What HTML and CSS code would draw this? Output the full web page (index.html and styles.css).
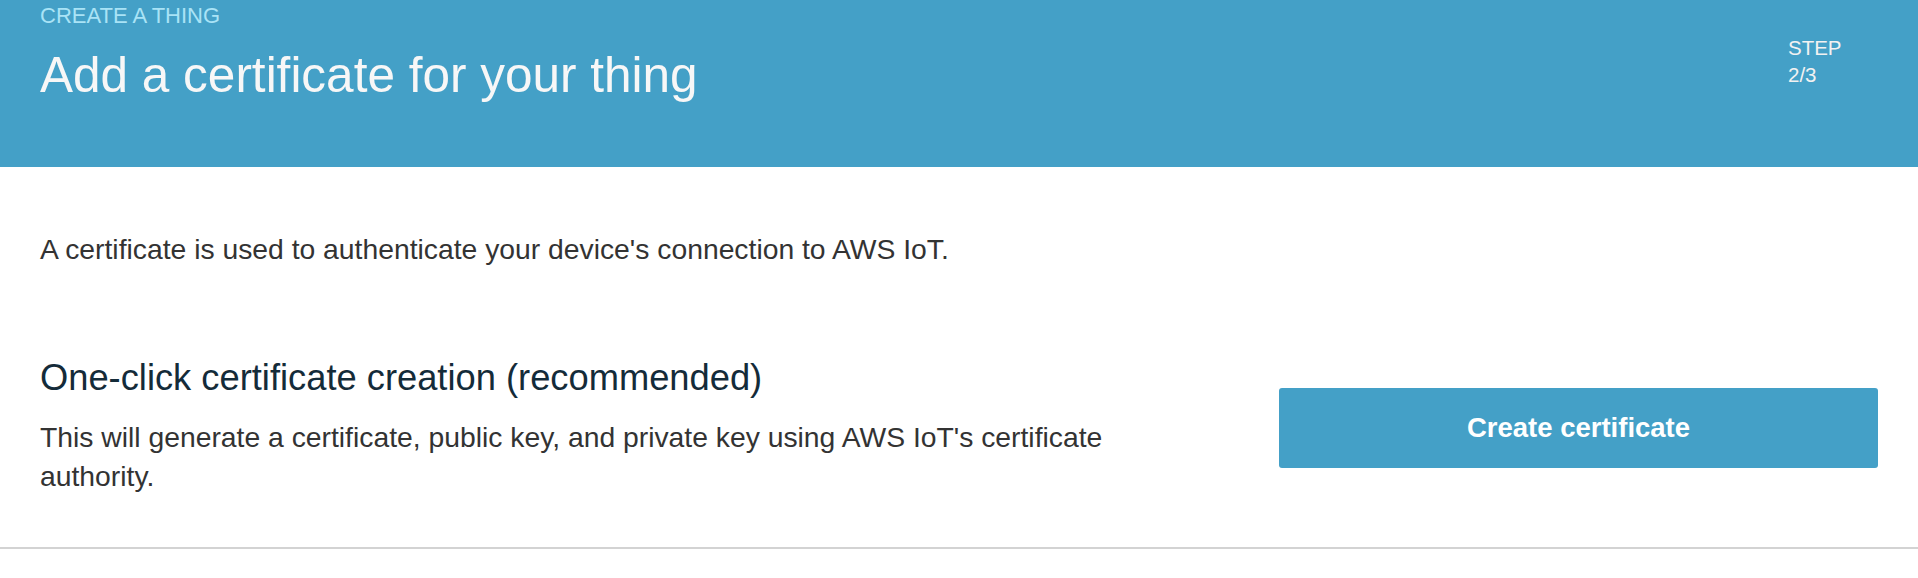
FILE: index.html
```html
<!DOCTYPE html>
<html lang="en">
<head>
<meta charset="utf-8">
<title>Add a certificate for your thing</title>
<link rel="stylesheet" href="styles.css">
</head>
<body>
<header class="banner">
  <div class="banner-left">
    <div class="eyebrow">CREATE A THING</div>
    <h1 class="title">Add a certificate for your thing</h1>
  </div>
  <div class="step">STEP<br>2/3</div>
</header>
<main class="content">
  <p class="intro">A certificate is used to authenticate your device's connection to AWS IoT.</p>
</main>
<section class="option">
  <div class="option-text">
    <h2 class="option-title">One-click certificate creation (recommended)</h2>
    <p class="option-desc">This will generate a certificate, public key, and private key using AWS IoT's certificate authority.</p>
  </div>
  <button class="btn-primary" type="button">Create certificate</button>
</section>
</body>
</html>
```
FILE: styles.css
```css
* { box-sizing: border-box; }
html, body { margin: 0; padding: 0; background: #ffffff; }
body {
  font-family: "Liberation Sans", Arial, sans-serif;
  color: #333333;
}
.banner {
  background: #44a0c7;
  height: 167px;
  padding: 0 40px;
  display: flex;
  justify-content: space-between;
  align-items: flex-start;
}
.banner-left { padding-top: 3px; }
.eyebrow {
  font-size: 22px;
  line-height: 26px;
  color: #a9e3f6;
}
.title {
  margin: 17px 0 0;
  font-size: 49.5px;
  line-height: 58px;
  font-weight: normal;
  color: #f7f7f7;
}
.step {
  width: 90px;
  padding-top: 34px;
  font-size: 20.5px;
  line-height: 27px;
  color: #f2f2f2;
}
.content { padding: 0 40px; }
.intro {
  margin: 0;
  padding-top: 63px;
  font-size: 28.3px;
  line-height: 39px;
  color: #333333;
}
.option {
  margin-top: 87px;
  padding: 0 40px 51px;
  border-bottom: 2px solid #d3d3d3;
  display: grid;
  grid-template-columns: 1fr 599px;
  column-gap: 100px;
  align-items: center;
}
.option-title {
  margin: 0;
  font-size: 36.3px;
  line-height: 44px;
  font-weight: normal;
  color: #142b39;
}
.option-desc {
  margin: 18px 0 0;
  font-size: 28.3px;
  line-height: 39px;
  color: #333333;
}
.btn-primary {
  width: 599px;
  height: 80px;
  border: none;
  border-radius: 3px;
  background: #44a0c7;
  color: #ffffff;
  font-family: "Liberation Sans", Arial, sans-serif;
  font-weight: bold;
  font-size: 27.5px;
  margin-top: 3px;
}
```
